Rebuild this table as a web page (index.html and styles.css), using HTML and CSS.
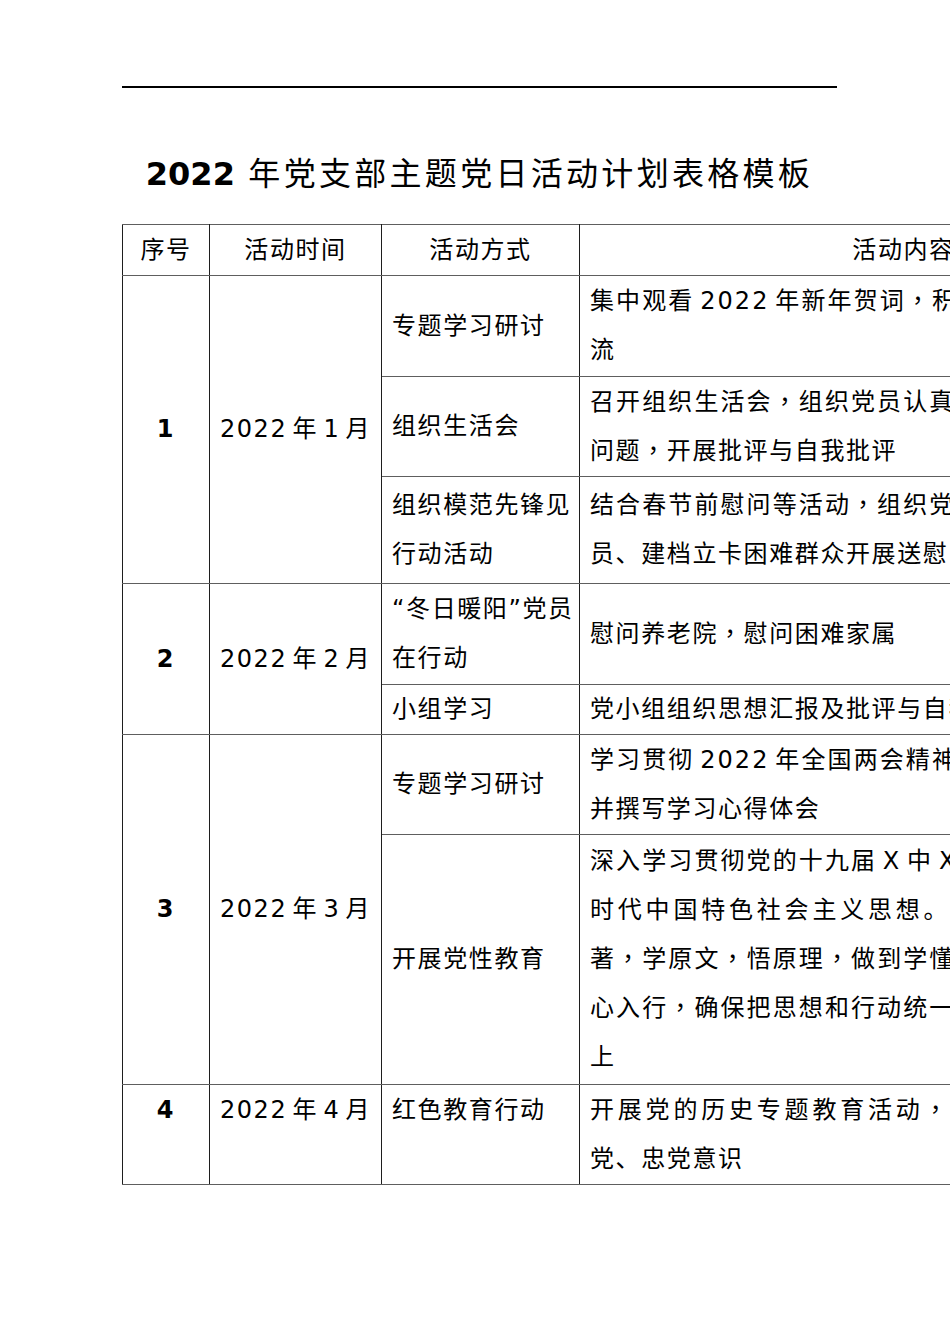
FILE: index.html
```html
<!DOCTYPE html>
<html lang="zh-CN">
<head>
<meta charset="utf-8">
<title>2022年党支部主题党日活动计划表格模板</title>
<link rel="stylesheet" href="styles.css">
</head>
<body>
<div class="page">
  <div class="rule"></div>
  <h1 class="title"><span class="title-num">2022</span> 年党支部主题党日活动计划表格模板</h1>
  <div class="table-wrap">
    <table class="plan">
      <colgroup>
        <col class="c-no">
        <col class="c-date">
        <col class="c-mode">
        <col class="c-content">
      </colgroup>
      <thead>
        <tr class="h-51">
          <th>序号</th>
          <th>活动时间</th>
          <th>活动方式</th>
          <th>活动内容</th>
        </tr>
      </thead>
      <tbody>
        <tr class="h-101">
          <td class="no" rowspan="3">1</td>
          <td class="date" rowspan="3">2022 年 1 月</td>
          <td class="mode">专题学习研讨</td>
          <td class="content"><span class="jl">集中观看 2022 年新年贺词<span class="p" lang="zh-TW">，</span>积极开展学习讨论交</span><br>流</td>
        </tr>
        <tr class="h-100">
          <td class="mode">组织生活会</td>
          <td class="content"><span class="jl">召开组织生活会<span class="p" lang="zh-TW">，</span>组织党员认真查摆自身存在的</span><br>问题<span class="p" lang="zh-TW">，</span>开展批评与自我批评</td>
        </tr>
        <tr class="h-107">
          <td class="mode">组织模范先锋见<br>行动活动</td>
          <td class="content"><span class="jl">结合春节前慰问等活动<span class="p" lang="zh-TW">，</span>组织党员走访困难党</span><br>员、建档立卡困难群众开展送慰问活动</td>
        </tr>
        <tr class="h-101">
          <td class="no" rowspan="2">2</td>
          <td class="date" rowspan="2">2022 年 2 月</td>
          <td class="mode">“冬日暖阳”党员<br>在行动</td>
          <td class="content">慰问养老院<span class="p" lang="zh-TW">，</span>慰问困难家属</td>
        </tr>
        <tr class="h-50">
          <td class="mode">小组学习</td>
          <td class="content">党小组组织思想汇报及批评与自我批评</td>
        </tr>
        <tr class="h-100">
          <td class="no" rowspan="2">3</td>
          <td class="date" rowspan="2">2022 年 3 月</td>
          <td class="mode">专题学习研讨</td>
          <td class="content"><span class="jl">学习贯彻 2022 年全国两会精神<span class="p" lang="zh-TW">，</span>组织党员讨论</span><br>并撰写学习心得体会</td>
        </tr>
        <tr class="h-250">
          <td class="mode">开展党性教育</td>
          <td class="content"><span class="jl">深入学习贯彻党的十九届 X 中 X 全会精神和新</span><br><span class="jx">时代中国特色社会主义思想。读原文、学原</span><br><span class="jl">著<span class="p" lang="zh-TW">，</span>学原文<span class="p" lang="zh-TW">，</span>悟原理<span class="p" lang="zh-TW">，</span>做到学懂弄通、入脑入</span><br><span class="jl">心入行<span class="p" lang="zh-TW">，</span>确保把思想和行动统一到党的决策部署</span><br>上</td>
        </tr>
        <tr class="h-100 top">
          <td class="no">4</td>
          <td class="date">2022 年 4 月</td>
          <td class="mode">红色教育行动</td>
          <td class="content"><span class="jx">开展党的历史专题教育活动<span class="p" lang="zh-TW">，</span>增强党员爱党、护</span><br>党、忠党意识</td>
        </tr>
      </tbody>
    </table>
  </div>
</div>
</body>
</html>
```

FILE: styles.css
```css
html, body {
  margin: 0;
  padding: 0;
  background: #ffffff;
  overflow: hidden;
}

body {
  font-family: "DejaVu Sans", "Noto Sans CJK SC", sans-serif;
  color: #000000;
}

.page {
  padding-top: 86px;
  padding-left: 122px;
}

.rule {
  width: 715px;
  height: 2px;
  background: #000000;
}

.title {
  width: 715px;
  margin: 61px 0 25px 0;
  text-align: center;
  font-size: 32px;
  line-height: 50px;
  font-weight: normal;
  letter-spacing: 3.3px;
  white-space: nowrap;
}

.title-num {
  font-weight: bold;
  letter-spacing: 0;
}

.table-wrap {
  width: 828px;
  overflow: hidden;
}

.plan {
  border-collapse: collapse;
  table-layout: fixed;
  width: 1105px;
  font-size: 24px;
  letter-spacing: 1.6px;
  word-spacing: -4px;
}

.c-no { width: 87px; }
.c-date { width: 172px; }
.c-mode { width: 198px; }
.c-content { width: 648px; }

.plan th,
.plan td {
  border-left: 1px solid #1e1e1e;
  border-right: 1px solid #1e1e1e;
  border-top: 1px solid #5e5e5e;
  border-bottom: 1px solid #5e5e5e;
  padding: 0 0 0 10px;
  line-height: 49px;
  vertical-align: middle;
  white-space: nowrap;
  overflow: hidden;
}

.plan th {
  font-weight: normal;
  text-align: center;
  padding: 0;
}

.plan td.no {
  text-align: center;
  font-weight: bold;
  padding: 0;
}

.plan td.date {
  text-align: center;
  padding: 0;
}

.plan td.mode,
.plan td.content {
  text-align: left;
}

.plan tr.top td {
  vertical-align: top;
  padding-top: 1px;
}

.plan tr.top td.no,
.plan tr.top td.date {
  padding-top: 1px;
}

.jl {
  letter-spacing: 2.1px;
}

.jx {
  letter-spacing: 3.8px;
}

.p {
  font-family: "Noto Sans CJK TC", sans-serif;
  line-height: 1;
}

.h-50 { height: 50px; }
.h-51 { height: 51px; }
.h-100 { height: 100px; }
.h-101 { height: 101px; }
.h-107 { height: 107px; }
.h-250 { height: 250px; }
```
